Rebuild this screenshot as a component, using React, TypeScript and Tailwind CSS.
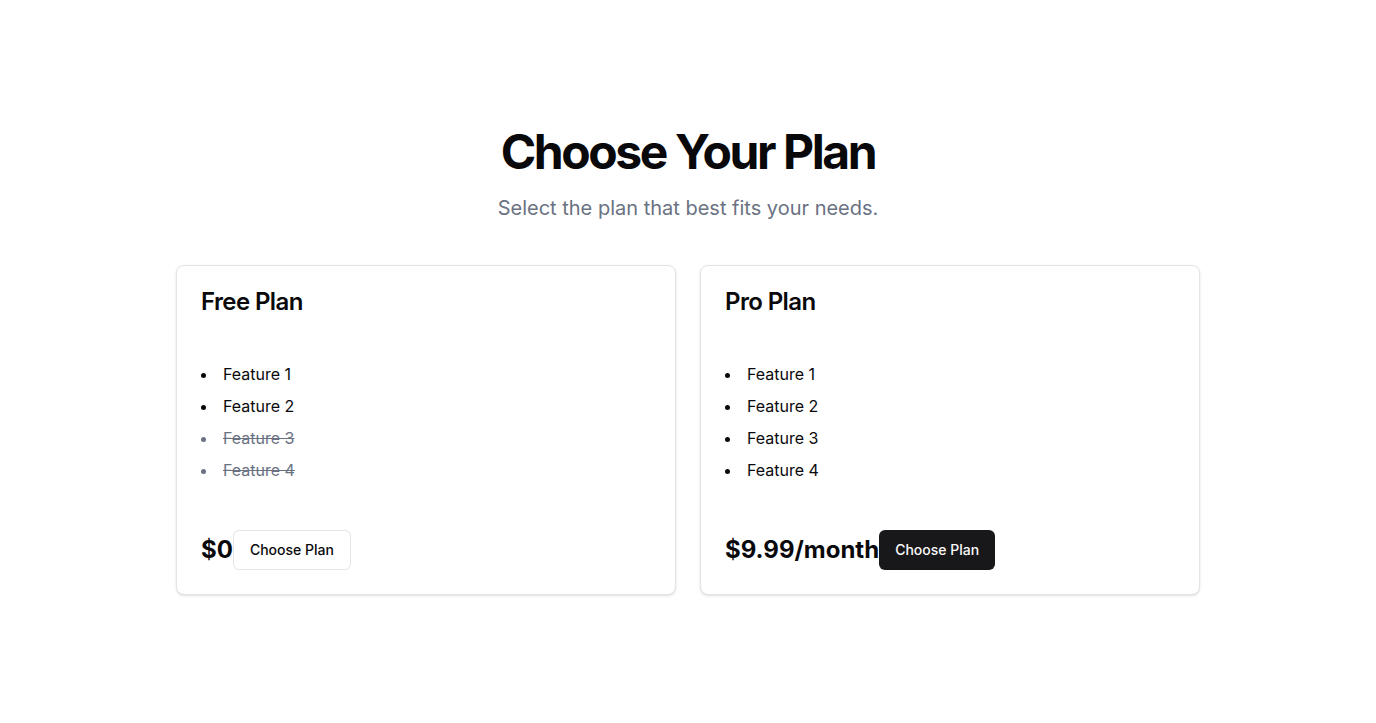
import React from 'react';

interface Plan {
  name: string;
  price: string;
  features: { label: string; included: boolean }[];
  primary?: boolean;
}

const plans: Plan[] = [
  {
    name: 'Free Plan',
    price: '$0',
    features: [
      { label: 'Feature 1', included: true },
      { label: 'Feature 2', included: true },
      { label: 'Feature 3', included: false },
      { label: 'Feature 4', included: false },
    ],
  },
  {
    name: 'Pro Plan',
    price: '$9.99/month',
    primary: true,
    features: [
      { label: 'Feature 1', included: true },
      { label: 'Feature 2', included: true },
      { label: 'Feature 3', included: true },
      { label: 'Feature 4', included: true },
    ],
  },
];

const PlanCard: React.FC<{ plan: Plan }> = ({ plan }) => (
  <div className="rounded-lg border border-[#e4e4e7] bg-white shadow-sm text-[#09090b]">
    {/* Header */}
    <div className="p-6 pb-0">
      <h3 className="text-2xl font-semibold leading-none tracking-tight">{plan.name}</h3>
    </div>

    {/* Features */}
    <div className="px-6 pt-12 pb-12">
      <ul className="list-disc list-inside space-y-2 text-base">
        {plan.features.map((f) => (
          <li
            key={f.label}
            className={f.included ? 'text-[#09090b]' : 'text-gray-500 line-through'}
          >
            {f.label}
          </li>
        ))}
      </ul>
    </div>

    {/* Footer */}
    <div className="flex items-center px-6 pb-6">
      <span className="text-2xl font-bold">{plan.price}</span>
      {plan.primary ? (
        <button className="h-10 px-4 rounded-md bg-[#18181b] text-[#fafafa] text-sm font-medium">
          Choose Plan
        </button>
      ) : (
        <button className="h-10 px-4 rounded-md border border-[#e4e4e7] bg-white text-[#09090b] text-sm font-medium">
          Choose Plan
        </button>
      )}
    </div>
  </div>
);

export default function App() {
  return (
    <div className="min-h-screen flex items-center justify-center bg-white font-['Inter',sans-serif]">
      <div className="w-full max-w-5xl">
        <div className="text-center">
          <h1 className="text-5xl font-bold tracking-tighter text-[#09090b]">Choose Your Plan</h1>
          <p className="mt-[18px] text-xl text-gray-500">Select the plan that best fits your needs.</p>
        </div>
        <div className="mt-[43px] grid grid-cols-2 gap-6">
          {plans.map((p) => (
            <PlanCard key={p.name} plan={p} />
          ))}
        </div>
      </div>
    </div>
  );
}
